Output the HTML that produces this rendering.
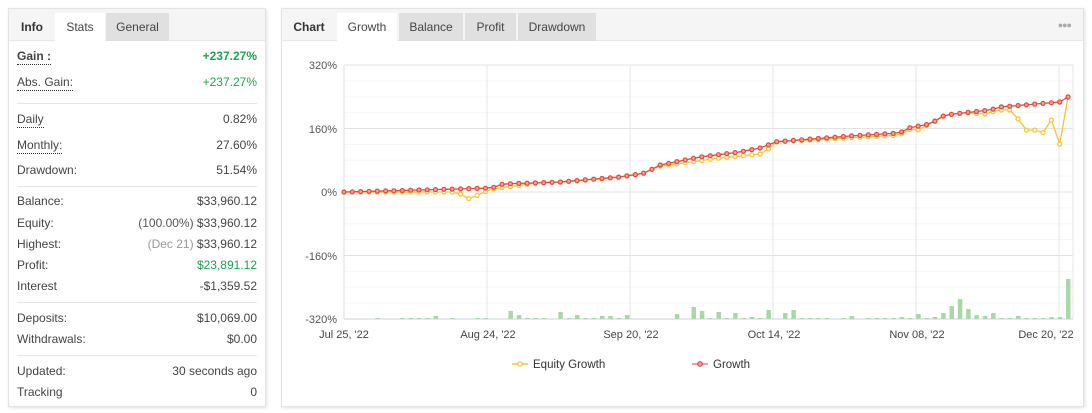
<!DOCTYPE html>
<html><head><meta charset="utf-8"><style>
*{box-sizing:border-box;margin:0;padding:0}
body{width:1092px;height:413px;background:#fff;font-family:"Liberation Sans",Arial,sans-serif;font-size:12px;color:#333;position:relative;overflow:hidden}
.panel{position:absolute;top:8px;height:399px;border:1px solid #e3e3e3;background:#fff;box-shadow:1px 1px 3px rgba(0,0,0,.12)}
.tabs{height:32px;background:#f5f5f5;border-bottom:1px solid #e8e8e8;position:relative}
.tab{position:absolute;top:4px;height:28px;line-height:28px;text-align:center;font-size:12px;color:#444}
.tab.g{background:#e0e0e0}.tab.w{background:#fff}
.row{position:absolute;left:8px;right:8px;height:20px;line-height:20px;font-size:12px;color:#444}
.row .l{position:absolute;left:0}.row .r{position:absolute;right:0}
.u{border-bottom:1px dotted #333;line-height:15px;display:inline-block}
.hr{position:absolute;left:8px;right:8px;height:1px;background:#e6e6e6}
.gr{color:#1ea34a}
</style></head><body>
<div class="panel" style="left:8px;width:258px">
 <div class="tabs">
  <div class="tab" style="left:0;width:46px;font-weight:bold;color:#333">Info</div>
  <div class="tab w" style="left:46px;width:50px">Stats</div>
  <div class="tab g" style="left:97px;width:63px">General</div>
 </div>
 <div class="row" style="top:37px"><span class="l"><b class="u">Gain :</b></span><span class="r gr"><b>+237.27%</b></span></div>
 <div class="row" style="top:63px"><span class="l u" style="top:3px">Abs. Gain:</span><span class="r gr">+237.27%</span></div>
 <div class="hr" style="top:94px"></div>
 <div class="row" style="top:100px"><span class="l u" style="top:3px">Daily</span><span class="r">0.82%</span></div>
 <div class="row" style="top:126px"><span class="l u" style="top:3px">Monthly:</span><span class="r">27.60%</span></div>
 <div class="row" style="top:151px"><span class="l">Drawdown:</span><span class="r">51.54%</span></div>
 <div class="hr" style="top:177px"></div>
 <div class="row" style="top:182px"><span class="l">Balance:</span><span class="r">$33,960.12</span></div>
 <div class="row" style="top:204px"><span class="l">Equity:</span><span class="r"><span style="color:#555">(100.00%)</span> $33,960.12</span></div>
 <div class="row" style="top:225px"><span class="l">Highest:</span><span class="r"><span style="color:#999">(Dec 21)</span> $33,960.12</span></div>
 <div class="row" style="top:246px"><span class="l">Profit:</span><span class="r gr">$23,891.12</span></div>
 <div class="row" style="top:267px"><span class="l">Interest</span><span class="r">-$1,359.52</span></div>
 <div class="hr" style="top:293px"></div>
 <div class="row" style="top:299px"><span class="l">Deposits:</span><span class="r">$10,069.00</span></div>
 <div class="row" style="top:320px"><span class="l">Withdrawals:</span><span class="r">$0.00</span></div>
 <div class="hr" style="top:346px"></div>
 <div class="row" style="top:352px"><span class="l">Updated:</span><span class="r">30 seconds ago</span></div>
 <div class="row" style="top:373px"><span class="l">Tracking</span><span class="r">0</span></div>
</div>
<div class="panel" style="left:281px;width:803px">
 <div class="tabs">
  <div class="tab" style="left:0;width:54px;font-weight:bold;color:#333">Chart</div>
  <div class="tab w" style="left:55px;width:60px">Growth</div>
  <div class="tab g" style="left:117px;width:64px">Balance</div>
  <div class="tab g" style="left:183px;width:51px">Profit</div>
  <div class="tab g" style="left:236px;width:78px">Drawdown</div>
  <div style="position:absolute;right:12px;top:11px;color:#aaa;font-size:9px;letter-spacing:-1px">●●●</div>
 </div>
</div>
<svg id="c" width="1092" height="413" style="position:absolute;left:0;top:0" font-family="Liberation Sans,Arial,sans-serif"></svg>
<script>
var s='';
for(var i=0;i<=16;i++){var y=65+i*15.875;s+='<line x1="344" x2="1073" y1="'+y+'" y2="'+y+'" stroke="'+(i%4==0?'#e2e2e2':'#f5f5f5')+'"/>';}
[487,630,773,916,1059,1073].forEach(function(x){s+='<line x1="'+x+'" x2="'+x+'" y1="65" y2="319" stroke="#e4e4e4"/>';});
s+='<line x1="344" x2="344" y1="65" y2="319" stroke="#ddd"/><line x1="344" x2="1073" y1="319" y2="319" stroke="#c8d3de"/>';
var yl=[['320%',69],['160%',133],['0%',196],['-160%',260],['-320%',323]];
yl.forEach(function(a){s+='<text x="337" y="'+a[1]+'" text-anchor="end" font-size="11" fill="#555">'+a[0]+'</text>';});
var xl=[['Jul 25, \'22',344],['Aug 24, \'22',488],['Sep 20, \'22',631],['Oct 14, \'22',774],['Nov 08, \'22',917],['Dec 20, \'22',1046]];
xl.forEach(function(a){s+='<text x="'+a[1]+'" y="338" text-anchor="middle" font-size="11" fill="#444">'+a[0]+'</text>';});
var bh=[0,0,0,0,0,1,0,0,1,1,1,1,1,3,0,1,0,0,1,1,0,1,0,9,4,1,1,1,0,3,8,1,4,1,1,3,3,1,1,4,0,0,0,0,0,6,8,0,13,9,1,8,1,7,8,1,2,1,10,0,7,10,2,1,1,1,1,0,1,3,0,3,1,1,1,1,2,1,6,9,1,2,7,14,22,11,4,2,3,7,1,1,3,1,1,1,2,2,2,40];
var n=88,x0=344,x1=1068,dx=(x1-x0)/(n-1);
for(var i=0;i<n;i++){var h=bh[Math.round(i*bh.length/n)]||0;h=Math.round(h*0.9);if(i==n-1)h=40;if(h>0)s+='<rect x="'+(x0+i*dx-2)+'" y="'+(319-h)+'" width="4.5" height="'+h+'" fill="#a8d8a8"/>';}
var k=[[344,192],[420,190],[492,188],[503,184],[560,182],[620,177],[645,173],[660,165],[700,157],[740,152],[765,147],[773,142],[850,136],[900,133],[908,128],[930,124],[945,115],[990,110],[1000,107],[1060,102],[1068,97]];
function itp(x,k){for(var j=0;j<k.length-1;j++){if(x<=k[j+1][0]){var t=(x-k[j][0])/(k[j+1][0]-k[j][0]);return k[j][1]+t*(k[j+1][1]-k[j][1]);}}return k[k.length-1][1];}
var ke=[[344,192],[455,192],[463,195],[471,200],[479,194],[492,189],[720,158],[740,156],[760,154],[765,154],[773,142],[900,135],[908,129],[916,131],[930,124],[945,115],[955,112],[985,114],[1000,110],[1010,110],[1020,121],[1027,131],[1036,130],[1044,133],[1052,119],[1060,145],[1063,145],[1068,97]];
var pr='',pe='',dr='',de='';
for(var i=0;i<n;i++){var x=x0+i*dx,yr=itp(x,k),ye=itp(x,ke);if(ye<yr)ye=yr;pr+=(i?'L':'M')+x.toFixed(1)+' '+yr.toFixed(1);pe+=(i?'L':'M')+x.toFixed(1)+' '+ye.toFixed(1);
de+='<circle cx="'+x.toFixed(1)+'" cy="'+ye.toFixed(1)+'" r="2" fill="#fff" stroke="#f5c330" stroke-width="1.2"/>';
dr+='<circle cx="'+x.toFixed(1)+'" cy="'+yr.toFixed(1)+'" r="2" fill="#f3a0a0" stroke="#e04a3a" stroke-width="1.2"/>';}
s+='<path d="'+pe+'" fill="none" stroke="#f5c330" stroke-width="1.3"/>'+de;
s+='<path d="'+pr+'" fill="none" stroke="#e04a3a" stroke-width="1.3"/>'+dr;
s+='<line x1="512" x2="528" y1="364" y2="364" stroke="#f5c330" stroke-width="1.5"/><circle cx="520" cy="364" r="2.3" fill="#fff" stroke="#f5c330" stroke-width="1.2"/><text x="533" y="368" font-size="11.5" fill="#333">Equity Growth</text>';
s+='<line x1="692" x2="708" y1="364" y2="364" stroke="#ea8080" stroke-width="1.5"/><circle cx="700" cy="364" r="2.3" fill="#f3a0a0" stroke="#e04a3a" stroke-width="1.2"/><text x="713" y="368" font-size="11.5" fill="#333">Growth</text>';
document.getElementById('c').innerHTML=s;
</script>
</body></html>
